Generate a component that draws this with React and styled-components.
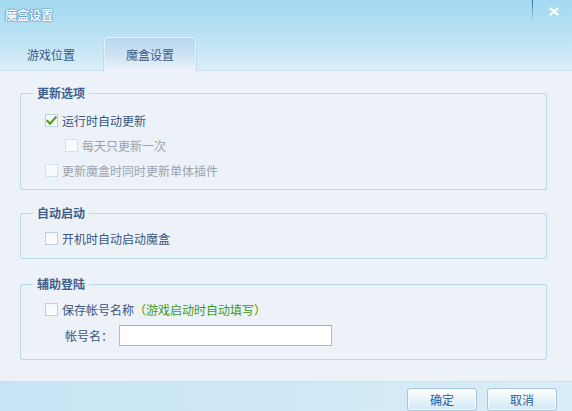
import React from "react";
import styled, { createGlobalStyle } from "styled-components";

const Global = createGlobalStyle`
  html, body { margin: 0; padding: 0; }
  body { font-family: "Noto Sans CJK SC", "Noto Sans", sans-serif; font-size: 12px; }
  * { box-sizing: border-box; }
`;

const Window = styled.div`
  width: 572px;
  height: 411px;
  display: flex;
  flex-direction: column;
  background: #edf2f8;
  overflow: hidden;
`;

const Header = styled.div`
  height: 71px;
  display: flex;
  flex-direction: column;
  background: linear-gradient(180deg, #a4d9f1 0%, #b9e2f4 50%, #dbeef8 100%);
  border-bottom: 1px solid #c7e1ee;
`;

const TitleBar = styled.div`
  height: 35px;
  display: flex;
  align-items: flex-start;
  padding-left: 5px;
`;

const Title = styled.div`
  margin-top: 8px;
  color: #fff;
  font-weight: bold;
  font-size: 12px;
  line-height: 14px;
  text-shadow: 0 0 2px #3f86bb, 0 0 1px #3f86bb, 0 0 1px #3f86bb;
  flex: 1;
`;

const Separator = styled.div`
  width: 1px;
  height: 22px;
  background: linear-gradient(180deg, #2f6fa3, rgba(47, 111, 163, 0));
`;

const CloseBtn = styled.div`
  width: 39px;
  height: 22px;
  display: flex;
  justify-content: center;
  padding-top: 7px;
  padding-left: 2px;
`;

const TabBar = styled.div`
  flex: 1;
  display: flex;
  align-items: flex-end;
  padding-left: 5px;
`;

const Tab = styled.div`
  width: ${(p) => (p.$active ? "94px" : "98px")};
  height: ${(p) => (p.$active ? "35px" : "32px")};
  display: flex;
  align-items: center;
  justify-content: center;
  color: #3a5a86;
  font-size: 12px;
  padding: ${(p) => (p.$active ? "1px 0 0 0" : "0 6px 0 0")};
  ${(p) =>
    p.$active &&
    `
    background: linear-gradient(180deg, #b6d6f1 0%, #cfe3f4 55%, #edf3f9 100%);
    border: 1px solid #c2dbea;
    border-bottom: none;
    border-radius: 3px 3px 0 0;
    box-shadow: inset 1px 1px 0 #e4f0f9, inset -1px 0 0 #e4f0f9;
    margin-bottom: -1px;
  `}
`;

const Content = styled.div`
  flex: 1;
  padding: 14px 25px 0 20px;
  display: flex;
  flex-direction: column;
`;

const GroupBox = styled.section`
  margin-top: ${(p) => p.$mt || 0}px;
  display: flex;
  flex-direction: column;
`;

const GroupHead = styled.div`
  height: 16px;
  display: flex;
  align-items: flex-end;
`;

const LeftEdge = styled.div`
  flex: 0 0 13px;
  height: 8px;
  border-top: 1px solid #b9dae8;
  border-left: 1px solid #b9dae8;
  border-top-left-radius: 3px;
`;

const RightEdge = styled.div`
  flex: 1 1 auto;
  height: 8px;
  border-top: 1px solid #b9dae8;
  border-right: 1px solid #b9dae8;
  border-top-right-radius: 3px;
`;

const Legend = styled.div`
  flex: none;
  align-self: stretch;
  padding: 0 4px;
  font-weight: bold;
  color: #3f5f8c;
  font-size: 12px;
  line-height: 16px;
  white-space: nowrap;
`;

const GroupBody = styled.div`
  padding: ${(p) => p.$pt || 6}px 0 ${(p) => p.$pb || 6}px 0;
  border: 1px solid #b9dae8;
  border-top: none;
  border-radius: 0 0 3px 3px;
`;

const Row = styled.div`
  height: ${(p) => p.$h || 25}px;
  display: flex;
  align-items: center;
  padding-left: ${(p) => (p.$indent ?? 24)}px;
  color: ${(p) => (p.$disabled ? "#9ba3ab" : "#3a5580")};
  font-size: 12px;
  white-space: nowrap;
`;

const Box = styled.span`
  width: 13px;
  height: 13px;
  flex: none;
  margin-right: 4px;
  border: 1px solid ${(p) => (p.$disabled ? "#d3e3ec" : "#b6d2e3")};
  background: ${(p) => (p.$disabled ? "#f7fafc" : "linear-gradient(180deg,#f2f6fa,#ffffff)")};
  display: flex;
  align-items: center;
  justify-content: center;
`;

const Hint = styled.span`
  color: #3f9a16;
`;

const Label = styled.span`
  flex: none;
  width: 98px;
  padding-left: 44px;
  color: #3a5580;
  white-space: nowrap;
`;

const Input = styled.input`
  width: 213px;
  height: 21px;
  border: 1px solid #a7c1d2;
  border-top-color: #94b2c8;
  background: #fff;
  outline: none;
  padding: 0 3px;
  margin: 0;
`;

const Footer = styled.div`
  height: 30px;
  display: flex;
  justify-content: flex-end;
  align-items: flex-start;
  gap: 10px;
  padding: 6px 15px 0 0;
  background: linear-gradient(90deg, #c6e4f4 0%, #d2e9f6 60%, #d9edf7 100%);
  border-top: 1px solid #c9e2ef;
`;

const Button = styled.button`
  width: 70px;
  height: 23px;
  border: 1px solid #a9c6da;
  border-radius: 3px;
  background: linear-gradient(180deg, #ffffff 0%, #eaf4fa 45%, #d3e8f4 100%);
  color: #2b5f9e;
  font-family: "Noto Sans CJK SC", sans-serif;
  font-size: 12px;
  padding: 0;
  box-shadow: inset 0 0 0 1px #f4f9fc;
`;

function Check({ checked, disabled }) {
  return (
    <Box $disabled={disabled}>
      {checked && (
        <svg width="11" height="10" viewBox="0 0 11 10">
          <path d="M1.5 5 L4 7.8 L9.5 1.5" fill="none" stroke="#5a9f1c" strokeWidth="2.2" strokeLinecap="square" />
        </svg>
      )}
    </Box>
  );
}

function Group({ title, mt, pt, pb, children }) {
  return (
    <GroupBox $mt={mt}>
      <GroupHead>
        <LeftEdge />
        <Legend>{title}</Legend>
        <RightEdge />
      </GroupHead>
      <GroupBody $pt={pt} $pb={pb}>
        {children}
      </GroupBody>
    </GroupBox>
  );
}

export default function App() {
  return (
    <>
      <Global />
      <Window>
        <Header>
          <TitleBar>
            <Title>魔盒设置</Title>
            <Separator />
            <CloseBtn>
              <svg width="10" height="9" viewBox="0 0 10 9">
                <path d="M1.5 1.5 L8.5 7.5 M8.5 1.5 L1.5 7.5" stroke="#ffffff" strokeWidth="2.2" strokeLinecap="round" />
              </svg>
            </CloseBtn>
          </TitleBar>
          <TabBar>
            <Tab>游戏位置</Tab>
            <Tab $active>魔盒设置</Tab>
          </TabBar>
        </Header>
        <Content>
          <Group title="更新选项" pt={7} pb={6}>
            <Row>
              <Check checked />
              运行时自动更新
            </Row>
            <Row $indent={44} $disabled>
              <Check disabled />
              每天只更新一次
            </Row>
            <Row $disabled>
              <Check disabled />
              更新魔盒时同时更新单体插件
            </Row>
          </Group>
          <Group title="自动启动" mt={15} pt={5} pb={7}>
            <Row>
              <Check />
              开机时自动启动魔盒
            </Row>
          </Group>
          <Group title="辅助登陆" mt={17} pt={5} pb={10}>
            <Row>
              <Check />
              保存帐号名称<Hint>（游戏启动时自动填写）</Hint>
            </Row>
            <Row $indent={0} $h={27}>
              <Label>帐号名：</Label>
              <Input />
            </Row>
          </Group>
        </Content>
        <Footer>
          <Button>确定</Button>
          <Button>取消</Button>
        </Footer>
      </Window>
    </>
  );
}
